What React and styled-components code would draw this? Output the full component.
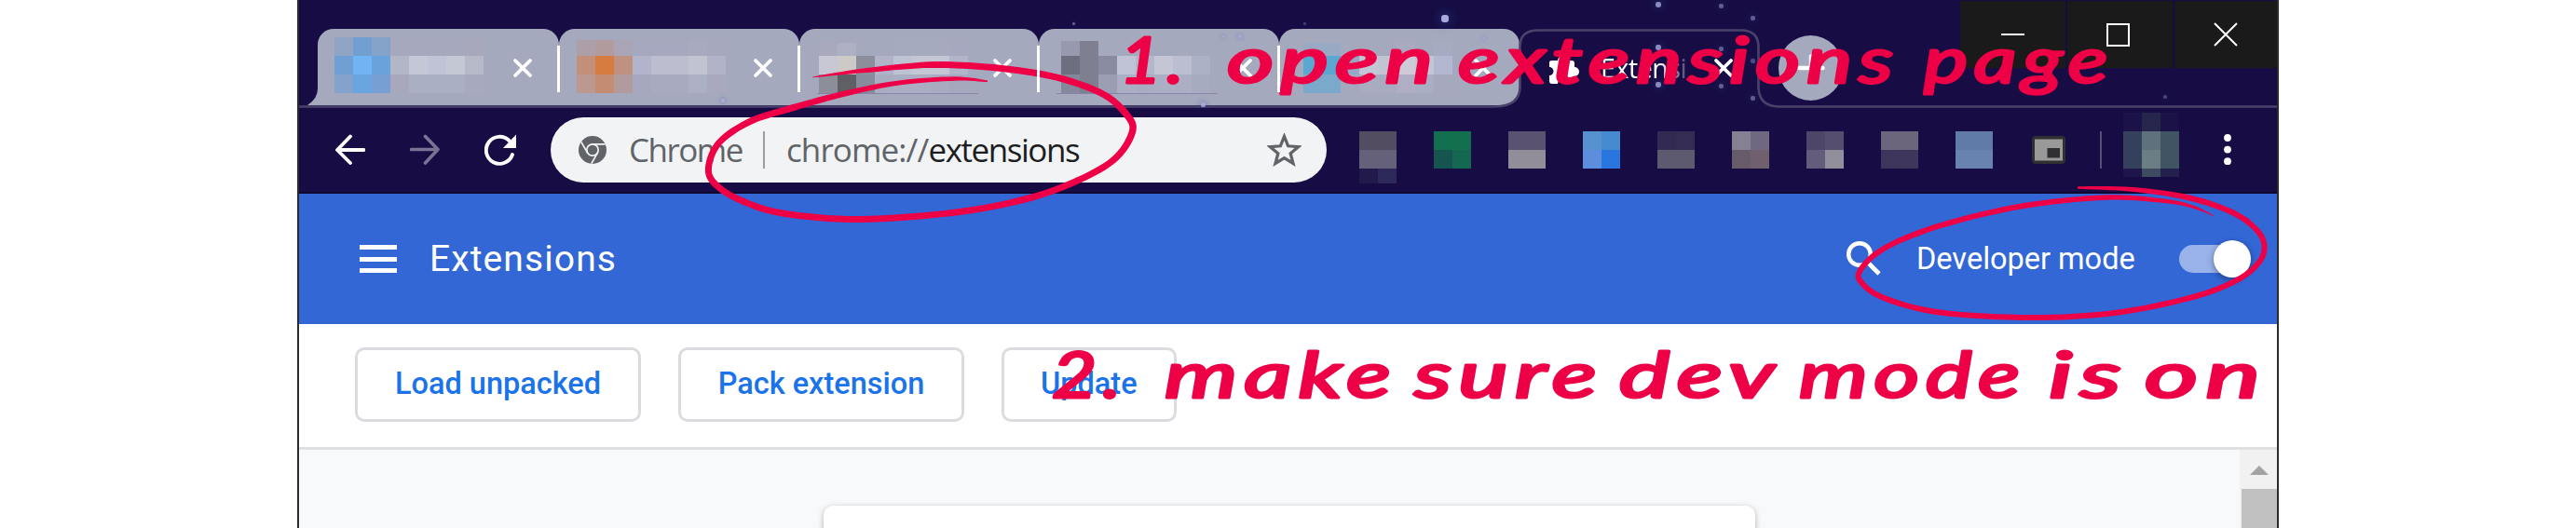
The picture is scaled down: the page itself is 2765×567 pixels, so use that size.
import React from "react";
import styled, { createGlobalStyle } from "styled-components";

const GlobalStyle = createGlobalStyle`
  * { box-sizing: border-box; }
  html, body { margin: 0; background: #fff; overflow: hidden; }
  svg { display: block; flex: none; }
`;

const INK = "#ee0046";
const NAVY = "#170d44";
const TAB = "#a5a9be";
const OUTLINE = "#4b426b";

const Page = styled.div`
  width: 2765px;
  height: 567px;
  padding-left: 319px;
  position: relative;
  overflow: hidden;
`;
const Window = styled.div`
  width: 2127px;
  height: 567px;
  display: flex;
  flex-direction: column;
  border: 2px solid #2b2b2d;
  border-width: 0 2px;
`;

/* Title bar and tabs */
const TitleBar = styled.div`
  height: 116px;
  flex: none;
  display: flex;
  align-items: flex-start;
  background: ${NAVY};
  position: relative;
`;
const TabStrip = styled.div`
  display: flex;
  align-items: flex-start;
  padding: 31px 0 0 20px;
`;
const TabBox = styled.div`
  width: ${(p) => p.$width}px;
  height: 82px;
  display: flex;
  align-items: flex-start;
  padding-left: ${(p) => p.$indent}px;
  padding-right: 28px;
  position: relative;
  background: ${(p) => (p.$active ? "transparent" : TAB)};
  border-radius: 17px 17px ${(p) => (p.$last ? "20px" : "0")} 0;
`;
const Separator = styled.div`
  position: absolute;
  right: -1px;
  top: 18px;
  width: 3px;
  height: 50px;
  background: #fff;
  z-index: 1;
`;
const Underline = styled.div`
  position: absolute;
  left: 19px;
  bottom: 12px;
  width: 173px;
  height: 1px;
  background: #8485a9;
`;
const Foot = styled.svg`
  position: absolute;
  left: -11px;
  bottom: 0;
`;
const TabClose = styled.svg`
  margin: 31px 0 0 auto;
`;
const PuzzleIcon = styled.svg`
  margin-top: 30px;
`;
const ActiveOutline = styled.svg`
  position: absolute;
  left: 0;
  top: 0;
`;
const ActiveTitle = styled.div`
  margin: 20px 0 0 22px;
  width: 104px;
  white-space: nowrap;
  font: 28.5px/44px "Open Sans", "Noto Sans", sans-serif;
  letter-spacing: -0.4px;
  color: #fff;
  -webkit-mask-image: linear-gradient(90deg, #000 60%, transparent 98%);
  mask-image: linear-gradient(90deg, #000 60%, transparent 98%);
`;
const NewTab = styled.div`
  width: 69px;
  height: 70px;
  margin: 38px 0 0 20px;
  border-radius: 50%;
  background: ${TAB};
  display: flex;
  align-items: center;
  justify-content: center;
`;
const WindowControls = styled.div`
  margin: 1px 0 0 auto;
  display: flex;
  gap: 2.5px;
`;
const ControlButton = styled.div`
  width: ${(p) => p.$width}px;
  height: 72px;
  background: #1a1a1a;
  display: flex;
  align-items: center;
  justify-content: center;
  padding-right: ${(p) => p.$shift || 0}px;
`;
const Star = styled.span`
  position: absolute;
  left: ${(p) => p.$x - 321 - p.$r}px;
  top: ${(p) => p.$y - p.$r}px;
  width: ${(p) => p.$r * 2}px;
  height: ${(p) => p.$r * 2}px;
  border-radius: 40%;
  background: #aaa9dc;
  opacity: ${(p) => p.$o};
  box-shadow: 0 0 ${(p) => p.$r * 3}px #2d4fa0;
`;

/* Pixelated thumbnails */
const MosaicGrid = styled.div`
  display: grid;
  flex: none;
  grid-template-columns: repeat(${(p) => p.$cols}, 20px);
  grid-template-rows: ${(p) => p.$rows};
  margin-top: ${(p) => p.$top || 0}px;
`;
const Cell = styled.i`
  background: ${(p) => p.$c};
`;

/* Toolbar */
const Toolbar = styled.div`
  height: 92px;
  flex: none;
  display: flex;
  align-items: center;
  padding-left: 39px;
  background: ${NAVY};
  border-bottom: 2px solid #0f0730;
  position: relative;
`;
const NavIcons = styled.div`
  display: flex;
  align-items: center;
  gap: 48px;
`;
const Omnibox = styled.div`
  width: 833px;
  height: 70px;
  margin-left: 36px;
  padding: 0 27px 0 30px;
  border-radius: 35px;
  background: #f1f3f5;
  display: flex;
  align-items: center;
  font: 35px/48px "Open Sans", "Noto Sans", sans-serif;
  color: #606367;
`;
const SiteName = styled.span`
  width: 123px;
  margin-left: 24px;
  white-space: nowrap;
  letter-spacing: -1.5px;
`;
const OmniDivider = styled.span`
  width: 2px;
  height: 40px;
  margin: 0 23px 0 21px;
  background: #999ca0;
`;
const Url = styled.span`
  flex: 1;
  white-space: nowrap;
  letter-spacing: -0.9px;
  b { font-weight: 400; color: #1c1e21; letter-spacing: -1.45px; }
`;
const ExtensionIcons = styled.div`
  display: flex;
  gap: 40px;
  margin-left: 35px;
  height: 40px;
`;
const PictureIcon = styled.svg`
  margin-left: 42px;
`;
const ToolDivider = styled.span`
  width: 2px;
  height: 40px;
  margin: 0 23px 0 37px;
  background: #554c77;
`;
const MenuDots = styled.svg`
  margin-left: 48px;
`;

/* Extensions page */
const Header = styled.div`
  height: 140px;
  flex: none;
  display: flex;
  align-items: center;
  padding: 0 28px 0 65px;
  background: #3367d6;
  color: #fff;
  font-family: Roboto, sans-serif;
`;
const MenuIcon = styled.div`
  width: 40px;
  height: 30px;
  display: flex;
  flex-direction: column;
  justify-content: space-between;
  i { height: 5px; background: #fff; }
`;
const Title = styled.h1`
  margin: 0 auto 0 35px;
  font-size: 39px;
  line-height: 50px;
  font-weight: 400;
  letter-spacing: 1.1px;
`;
const ModeLabel = styled.span`
  width: 236px;
  margin-left: 37px;
  font-size: 32.5px;
  white-space: nowrap;
`;
const Toggle = styled.div`
  width: 77px;
  height: 30px;
  margin-left: 46px;
  border-radius: 15px;
  background: linear-gradient(90deg, #99b3ea 64px, transparent 64px);
  display: flex;
  align-items: center;
  justify-content: flex-end;
`;
const Knob = styled.span`
  width: 40px;
  height: 40px;
  flex: none;
  border-radius: 50%;
  background: #fff;
  box-shadow: 0 2px 7px rgba(0, 0, 0, 0.4);
`;
const Actions = styled.div`
  height: 135px;
  flex: none;
  display: flex;
  gap: 40px;
  padding: 25px 0 0 60px;
  background: #fff;
  border-bottom: 3px solid #e0e0e0;
`;
const ActionButton = styled.button`
  width: ${(p) => p.$width}px;
  height: 80px;
  padding: 0 0 2px;
  border: 3px solid #dadce0;
  border-radius: 10px;
  background: #fff;
  color: #1a73e8;
  font: 500 32.5px/40px Roboto, sans-serif;
  white-space: nowrap;
`;
const Content = styled.div`
  flex: 1;
  min-height: 0;
  display: flex;
  background: #f8f9fa;
  overflow: hidden;
`;
const Card = styled.div`
  width: 1000px;
  height: 60px;
  margin: 60px 0 0 563px;
  border-radius: 10px 10px 0 0;
  background: #fff;
  box-shadow: 0 2px 6px rgba(60, 64, 67, 0.4);
`;
const Scrollbar = styled.div`
  width: 40px;
  margin-left: auto;
  padding: 17px 0 0 2px;
  background: #f1f1f1;
  svg { margin: 0 0 15px 9px; }
`;
const Thumb = styled.div`
  height: 60px;
  background: #c1c1c1;
`;
const Notes = styled.svg`
  position: absolute;
  left: 0;
  top: 0;
`;
const NoteWord = styled.text`
  font: italic 400 68px "Segoe Script", Lato, sans-serif;
  letter-spacing: 5px;
  stroke: ${INK};
  stroke-width: 3px;
  stroke-linejoin: round;
`;

const tabs = [
  { width: 259, indent: 18, first: 20, rows: [
    "#8fa5c3 #729fd2 #85a2c8 #a6a9bd #a6a9bd #a6a9bd #a6a9bd #a7a8bc",
    "#6f9fd3 #70b4f3 #6aa3dc #b3b6c6 #c3c7d6 #bfc3d5 #c4c8d5 #b6b9c8",
    "#83a2cc #69a5e0 #789fd3 #a7a8bc #abafc3 #abafc3 #abafc3 #a7a9be" ] },
  { width: 257.5, indent: 19, first: 17, rows: [
    "#ad9fa8 #b19b9d #a9a5b6 #a5a8be #a5a8be #a5a8be #a8aac0 #a6a8be",
    "#c38f78 #d67c41 #be9180 #b1b4ca #bdbdd0 #bdbdd0 #c2c3d1 #b1b4c9",
    "#bb9990 #c48c70 #b29b9c #a5a8be #a8aabf #a8aabf #acb0c4 #a8a9be" ] },
  { width: 257.5, indent: 21.5, first: 14, line: true, rows: [
    "#a9a9bd #adb0c2 #a5a9be #a5a9be #a6aabf #a6aabf #a6aabf #a5a8be",
    "#c7c8d4 #ccc9c6 #8c8e9b #b1b4c8 #bec3d3 #c4c6d3 #c4c6d3 #b1b5ca",
    "#8c8e9a #5f6065 #888b9c #a9adc2 #abaec2 #abaec2 #a9abc0 #a6a9be" ] },
  { width: 258, indent: 24, first: 16, line: true, rows: [
    "#9799ae #7e8092 #a5a9be #a5a9be #a5a9be #a5a9be #a5a9be #a5a9be",
    "#6d6f7f #7e8092 #898ca0 #bfc3d5 #b3b7ca #c4c6d5 #bbbed1 #adb1c5",
    "#85879a #7e8092 #9b9eb2 #abafc3 #a9adc2 #abafc3 #abafc3 #a7abc0" ] },
  { width: 258, indent: 26, first: 14, rows: [
    "#99a9c4 #99a9c4 #a5a9be #a5a9be #a5a9be #a9aabf #a5a9be #a7abc1",
    "#5aa8d2 #5aa8d2 #96a8c6 #c2c6d5 #c2c3d3 #cdcbd7 #c2c7d5 #b3b7d2",
    "#7aa9cb #7aa9cb #a5a9be #a9acc0 #a9acc0 #b0aec4 #a9aec3 #a6a9be" ] },
];

const extensions = [
  ["#524d60 #524d60", "#65617b #65617b", "#221a4b #2d295b"],
  ["#12704f #12704f", "#15544f #146852"],
  ["#595271 #595271", "#918e99 #918e99"],
  ["#5691d0 #468bd0", "#5d8ddd #2976df"],
  ["#322a52 #352c54", "#5d596e #5d596e"],
  ["#858092 #706881", "#675b69 #705f6d"],
  ["#4d4669 #554e6e", "#635d7b #918f9c"],
  ["#6b667c #6b667c", "#3d355c #3f365c"],
  ["#607ba8 #607ba8", "#6883af #6883af"],
];

const stars = [
  [1551, 20, 4, 1], [1780, 5, 3, 0.8], [1847, 6, 2.5, 0.5], [1881, 19, 2.5, 0.5],
  [1780, 51, 3, 0.8], [1847, 52, 2.5, 0.5], [1881, 65, 2.5, 0.4], [1780, 91, 3, 0.8],
  [1847, 92, 2.5, 0.5], [1881, 105, 2.5, 0.5], [1528, 121, 2.5, 0.8], [1152, 25, 1.5, 0.5],
  [478, 188, 2.5, 0.25], [937, 117, 1.2, 0.6], [2324, 104, 2, 0.35], [1400, 25, 1.5, 0.3],
  [1592, 40, 1.5, 0.5], [1312, 39, 1.5, 0.6], [1331, 39, 1.7, 0.5], [1291, 112, 2.5, 0.9],
  [776, 108, 1.7, 0.6],
];

// Points are [x, y, stroke width].
const urlLoop = [
  [872, 83, 0.6], [930, 75.5, 5], [1015, 69.5, 7], [1115, 79, 7], [1180, 99, 7], [1210, 124, 7.5],
  [1215, 143, 7.5], [1195, 172, 7], [1152, 196, 7], [1100, 214, 7], [1026, 228, 7], [922, 235.5, 7], [840, 229, 7],
  [795, 215, 7], [768, 198, 7], [760.5, 180, 7], [772, 153, 7], [805, 130.5, 7], [850, 116, 7], [909, 100, 6],
  [965, 89, 5], [1025, 84.5, 4.5], [1060, 87.3, 1.5],
];
const modeLoop = [
  [2230, 201.5, 2.5], [2290, 203.5, 5], [2350, 212.5, 6], [2398, 229, 6], [2424, 249, 6], [2430.5, 268, 6],
  [2421, 286, 6], [2396, 303.5, 6], [2350, 320, 6], [2270, 336, 6], [2181, 341, 6], [2082, 335.5, 6],
  [2021, 319.5, 6], [1997, 302, 6], [1997, 290, 6], [2013, 273, 6], [2042, 257, 6], [2092, 239.5, 6],
  [2172, 221, 6], [2261, 212, 5.5], [2325, 216, 4.5], [2355, 222.5, 3], [2376, 231.7, 0.6],
];

const notes = [
  ["1.", 1202, 89, 74], ["open", 1317, 89, 228], ["extensions", 1565, 89, 474], ["page", 2065, 89, 204],
  ["2.", 1129, 427, 80], ["make", 1250, 427, 250], ["sure", 1518, 427, 203], ["dev", 1738, 427, 174],
  ["mode", 1931, 427, 244], ["is", 2199, 427, 86], ["on", 2302, 427, 132],
];

// Turns a list of points into a closed outline whose thickness follows the third value.
function brush(points) {
  const left = [];
  const right = [];
  const at = (i) => points[Math.max(0, Math.min(points.length - 1, i))];
  for (let i = 0; i < points.length - 1; i++) {
    const [a, b, c, d] = [at(i - 1), at(i), at(i + 1), at(i + 2)];
    for (let s = 0; s <= 8; s++) {
      const t = s / 8;
      const pos = [0, 1].map((k) => 0.5 * (2 * b[k] + (c[k] - a[k]) * t
        + (2 * a[k] - 5 * b[k] + 4 * c[k] - d[k]) * t * t + (3 * b[k] - a[k] - 3 * c[k] + d[k]) * t ** 3));
      const dir = [0, 1].map((k) => 0.5 * (c[k] - a[k]
        + 2 * (2 * a[k] - 5 * b[k] + 4 * c[k] - d[k]) * t + 3 * (3 * b[k] - a[k] - 3 * c[k] + d[k]) * t * t));
      const len = Math.hypot(dir[0], dir[1]) || 1;
      const w = (b[2] + (c[2] - b[2]) * t) / 2;
      const n = [(-dir[1] / len) * w, (dir[0] / len) * w];
      left.push(`${(pos[0] + n[0]).toFixed(1)} ${(pos[1] + n[1]).toFixed(1)}`);
      right.unshift(`${(pos[0] - n[0]).toFixed(1)} ${(pos[1] - n[1]).toFixed(1)}`);
    }
  }
  return `M${left.concat(right).join("L")}Z`;
}

function Mosaic({ rows, sizes, top }) {
  const cells = rows.map((r) => r.split(" "));
  return (
    <MosaicGrid $cols={cells[0].length} $rows={sizes} $top={top}>
      {cells.flat().map((c, i) => <Cell key={i} $c={c} />)}
    </MosaicGrid>
  );
}

function Close() {
  return (
    <TabClose width="22" height="22" viewBox="0 0 22 22">
      <path d="M3 3L19 19M19 3L3 19" stroke="#fff" strokeWidth="3.8" strokeLinecap="round" />
    </TabClose>
  );
}

export default function App() {
  return (
    <Page>
      <GlobalStyle />
      <Window>
        <TitleBar>
          <TabStrip>
            {tabs.map((t, i) => (
              <TabBox key={i} $width={t.width} $indent={t.indent} $last={i === 4}>
                {i === 0 && (
                  <Foot width="11" height="18"><path d="M11 0V18H0Q11 11 11 0Z" fill={TAB} /></Foot>
                )}
                <Mosaic rows={t.rows} sizes={`${t.first}px 20px 20px`} top={29 - t.first} />
                <Close />
                {t.line && <Underline />}
                {i < 4 && <Separator />}
              </TabBox>
            ))}
            <TabBox $width={258} $indent={32} $active>
              <PuzzleIcon width="33" height="30" viewBox="0 0 33 30">
                <path fill="#fff" d="M0 6Q0 4 3 4H9A5 5 0 0 1 19 4H24Q27 4 27 7V11A4.5 4.5 0 0 1 27 21V26Q27 29 24 29H18A4 4 0 0 0 9 29H3Q0 29 0 26V20A4 4 0 0 0 0 11Z" />
              </PuzzleIcon>
              <ActiveTitle>Extensi</ActiveTitle>
              <Close />
            </TabBox>
          </TabStrip>
          <NewTab>
            <svg width="30" height="30"><path d="M15 2.5V27.5M2.5 15H27.5" stroke="#fff" strokeWidth="4.5" strokeLinecap="round" /></svg>
          </NewTab>
          <WindowControls>
            <ControlButton $width={112.5}><svg width="25" height="25"><path d="M0 12H25" stroke="#fff" strokeWidth="2" /></svg></ControlButton>
            <ControlButton $width={112.5} $shift={4}><svg width="25" height="25"><path d="M1 1H24V24H1Z" fill="none" stroke="#fff" strokeWidth="2" /></svg></ControlButton>
            <ControlButton $width={110} $shift={1}><svg width="26" height="26"><path d="M1 1L25 25M25 1L1 25" stroke="#fff" strokeWidth="2" /></svg></ControlButton>
          </WindowControls>
          <ActiveOutline width="2123" height="116">
            <path fill="none" stroke={OUTLINE} strokeWidth="2.6" d="M0 114.5H1284Q1310 114 1310.5 94V49Q1311 32.5 1330 32.5H1548Q1566 32.5 1566.5 50V94Q1567 114 1588 114.5H2123" />
          </ActiveOutline>
          {stars.map(([x, y, r, o], i) => <Star key={i} $x={x} $y={y} $r={r} $o={o} />)}
        </TitleBar>
        <Toolbar>
          <NavIcons>
            <svg width="32" height="34" viewBox="0 0 32 34"><path d="M30.5 17H3M16 2.5L2 17L16 31" fill="none" stroke="#fff" strokeWidth="3.8" strokeLinecap="round" strokeLinejoin="round" /></svg>
            <svg width="32" height="34" viewBox="0 0 32 34"><path d="M1.5 16.5H29M16.5 2.5L30 16.5L16.5 31" fill="none" stroke="#7b7396" strokeWidth="3.6" strokeLinecap="round" strokeLinejoin="round" /></svg>
            <svg width="35" height="35" viewBox="0 0 35 35">
              <path d="M26.5 7A14.5 14.5 0 1 0 30 22" fill="none" stroke="#fff" strokeWidth="3.9" strokeLinecap="round" />
              <path d="M34 0.5V15H20Z" fill="#fff" />
            </svg>
          </NavIcons>
          <Omnibox>
            <svg width="30" height="30" viewBox="0 0 30 30">
              <circle cx="15" cy="15" r="15" fill="#606367" />
              <circle cx="15" cy="15" r="6.2" fill="none" stroke="#f1f3f5" strokeWidth="1.7" />
              <path d="M15 8.8H28.5M9.6 18.1L2.8 6.4M20.4 18.1L13.8 29.7" stroke="#f1f3f5" strokeWidth="1.7" />
            </svg>
            <SiteName>Chrome</SiteName>
            <OmniDivider />
            <Url>chrome://<b>extensions</b></Url>
            <svg width="37" height="36" viewBox="0 0 37 36">
              <path d="M18.5 3.5L22.6 13.8L33.8 14.6L25.2 21.8L28 32.5L18.5 26.7L9 32.5L11.8 21.8L3.2 14.6L14.4 13.8Z" fill="none" stroke="#606367" strokeWidth="3.3" />
            </svg>
          </Omnibox>
          <ExtensionIcons>
            {extensions.map((rows, i) => <Mosaic key={i} rows={rows} sizes={rows.length > 2 ? "20px 20px 16px" : "20px 20px"} />)}
          </ExtensionIcons>
          <PictureIcon width="36" height="30" viewBox="0 0 36 30">
            <rect width="36" height="30" rx="4" fill="#303033" />
            <rect x="3" y="3.5" width="30" height="23" fill="#999" />
            <rect x="16.5" y="13" width="13.5" height="10.5" fill="#303033" />
          </PictureIcon>
          <ToolDivider />
          <Mosaic rows={["#1b1347 #26264d #1b1347", "#35405c #5e717c #405464", "#35405c #6b7e84 #405464", "#1e164b #3c4b60 #24204e"]} sizes="20px 20px 20px 9px" top={-11} />
          <MenuDots width="8" height="34"><g fill="#fff"><circle cx="4" cy="4" r="3.9" /><circle cx="4" cy="16.6" r="3.9" /><circle cx="4" cy="29.2" r="3.9" /></g></MenuDots>
        </Toolbar>
        <Header>
          <MenuIcon><i /><i /><i /></MenuIcon>
          <Title>Extensions</Title>
          <svg width="38" height="38" viewBox="0 0 38 38">
            <circle cx="14" cy="14" r="11.8" fill="none" stroke="#fff" strokeWidth="4.4" />
            <path d="M22.5 22.5L35 35" stroke="#fff" strokeWidth="4.6" />
          </svg>
          <ModeLabel>Developer mode</ModeLabel>
          <Toggle><Knob /></Toggle>
        </Header>
        <Actions>
          <ActionButton $width={307}>Load unpacked</ActionButton>
          <ActionButton $width={307}>Pack extension</ActionButton>
          <ActionButton $width={187.5}>Update</ActionButton>
        </Actions>
        <Content>
          <Card />
          <Scrollbar>
            <svg width="20" height="10"><path d="M10 0L20 10H0Z" fill="#a3a3a3" /></svg>
            <Thumb />
          </Scrollbar>
        </Content>
      </Window>
      <Notes width="2765" height="567" fill={INK}>
        <path d={brush(urlLoop)} />
        <path d={brush(modeLoop)} />
        {notes.map(([word, x, y, w]) => (
          <NoteWord key={word} x={x} y={y} textLength={w} lengthAdjust="spacingAndGlyphs">{word}</NoteWord>
        ))}
      </Notes>
    </Page>
  );
}
